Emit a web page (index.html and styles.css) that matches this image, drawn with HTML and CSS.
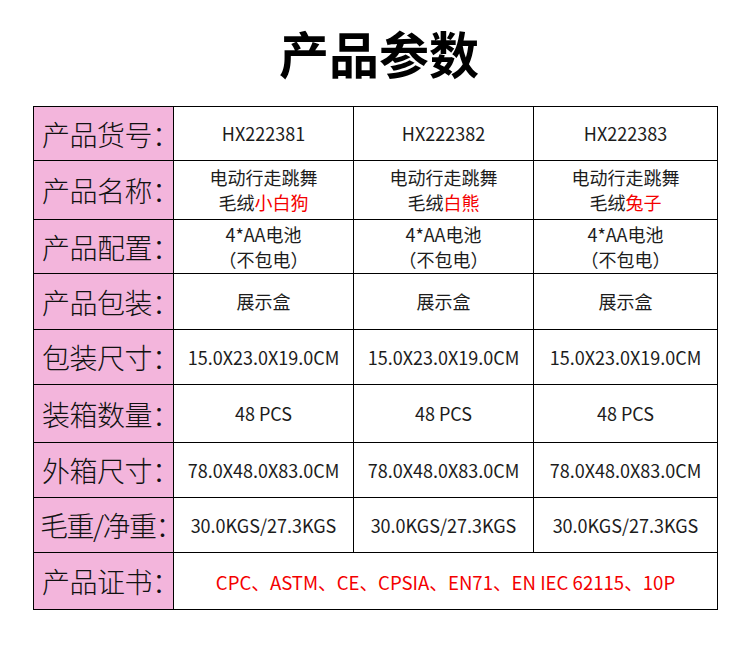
FILE: index.html
```html
<!DOCTYPE html>
<html lang="zh-CN">
<head>
<meta charset="utf-8">
<title>产品参数</title>
<link rel="stylesheet" href="styles.css">
</head>
<body>
<div class="page">
  <h1 class="title">产品参数</h1>
  <table class="spec">
    <colgroup>
      <col class="c-label">
      <col class="c-data">
      <col class="c-data">
      <col class="c-last">
    </colgroup>
    <tr class="r1">
      <th>产品货号：</th>
      <td>HX222381</td>
      <td>HX222382</td>
      <td>HX222383</td>
    </tr>
    <tr class="r2">
      <th>产品名称：</th>
      <td class="two">电动行走跳舞<br>毛绒<span class="red">小白狗</span></td>
      <td class="two">电动行走跳舞<br>毛绒<span class="red">白熊</span></td>
      <td class="two">电动行走跳舞<br>毛绒<span class="red">兔子</span></td>
    </tr>
    <tr class="r3">
      <th>产品配置：</th>
      <td class="two">4*AA电池<br>（不包电）</td>
      <td class="two">4*AA电池<br>（不包电）</td>
      <td class="two">4*AA电池<br>（不包电）</td>
    </tr>
    <tr class="r4">
      <th>产品包装：</th>
      <td>展示盒</td>
      <td>展示盒</td>
      <td>展示盒</td>
    </tr>
    <tr class="r5">
      <th>包装尺寸：</th>
      <td>15.0X23.0X19.0CM</td>
      <td>15.0X23.0X19.0CM</td>
      <td>15.0X23.0X19.0CM</td>
    </tr>
    <tr class="r6">
      <th>装箱数量：</th>
      <td>48 PCS</td>
      <td>48 PCS</td>
      <td>48 PCS</td>
    </tr>
    <tr class="r7">
      <th>外箱尺寸：</th>
      <td>78.0X48.0X83.0CM</td>
      <td>78.0X48.0X83.0CM</td>
      <td>78.0X48.0X83.0CM</td>
    </tr>
    <tr class="r8">
      <th class="tight">毛重/净重：</th>
      <td>30.0KGS/27.3KGS</td>
      <td>30.0KGS/27.3KGS</td>
      <td>30.0KGS/27.3KGS</td>
    </tr>
    <tr class="r9">
      <th>产品证书：</th>
      <td colspan="3" class="cert">CPC、ASTM、CE、CPSIA、EN71、EN IEC 62115、10P</td>
    </tr>
  </table>
</div>
</body>
</html>
```

FILE: styles.css
```css
html, body {
  margin: 0;
  padding: 0;
  background: #ffffff;
}

body {
  font-family: "Noto Sans CJK SC", "Noto Sans", sans-serif;
  color: #1c1c1c;
  width: 750px;
  height: 650px;
  overflow: hidden;
}

.page {
  padding-top: 27px;
}

.title {
  margin: 0 0 29px 0;
  font-size: 50px;
  line-height: 50px;
  font-weight: 700;
  text-align: center;
  color: #000;
  padding-left: 8px;
}

.spec {
  border-collapse: collapse;
  margin-left: 33px;
  table-layout: fixed;
  width: 684px;
}

.c-label { width: 140px; }
.c-data { width: 180px; }
.c-last { width: 184px; }

.spec th,
.spec td {
  border: 1px solid #000;
  padding: 0;
  text-align: center;
  vertical-align: middle;
}

.spec th {
  background: #f3b5dc;
  font-weight: 300;
  font-size: 28px;
  color: #111;
  white-space: nowrap;
  letter-spacing: -0.5px;
  padding-left: 8px;
}

.spec th.tight {
  letter-spacing: -1.5px;
  padding-left: 6px;
}

.spec td {
  font-size: 18px;
  line-height: 25px;
  color: #1c1c1c;
  white-space: nowrap;
}

.red {
  color: #f40000;
}

.spec td.cert {
  color: #f40000;
  font-size: 18.6px;
}

.r1 { height: 54px; }
.r2 { height: 59px; }
.r3 { height: 54px; }
.r4 { height: 56px; }
.r5 { height: 55px; }
.r6 { height: 58px; }
.r7 { height: 55px; }
.r8 { height: 55px; }
.r9 { height: 57px; }
```
